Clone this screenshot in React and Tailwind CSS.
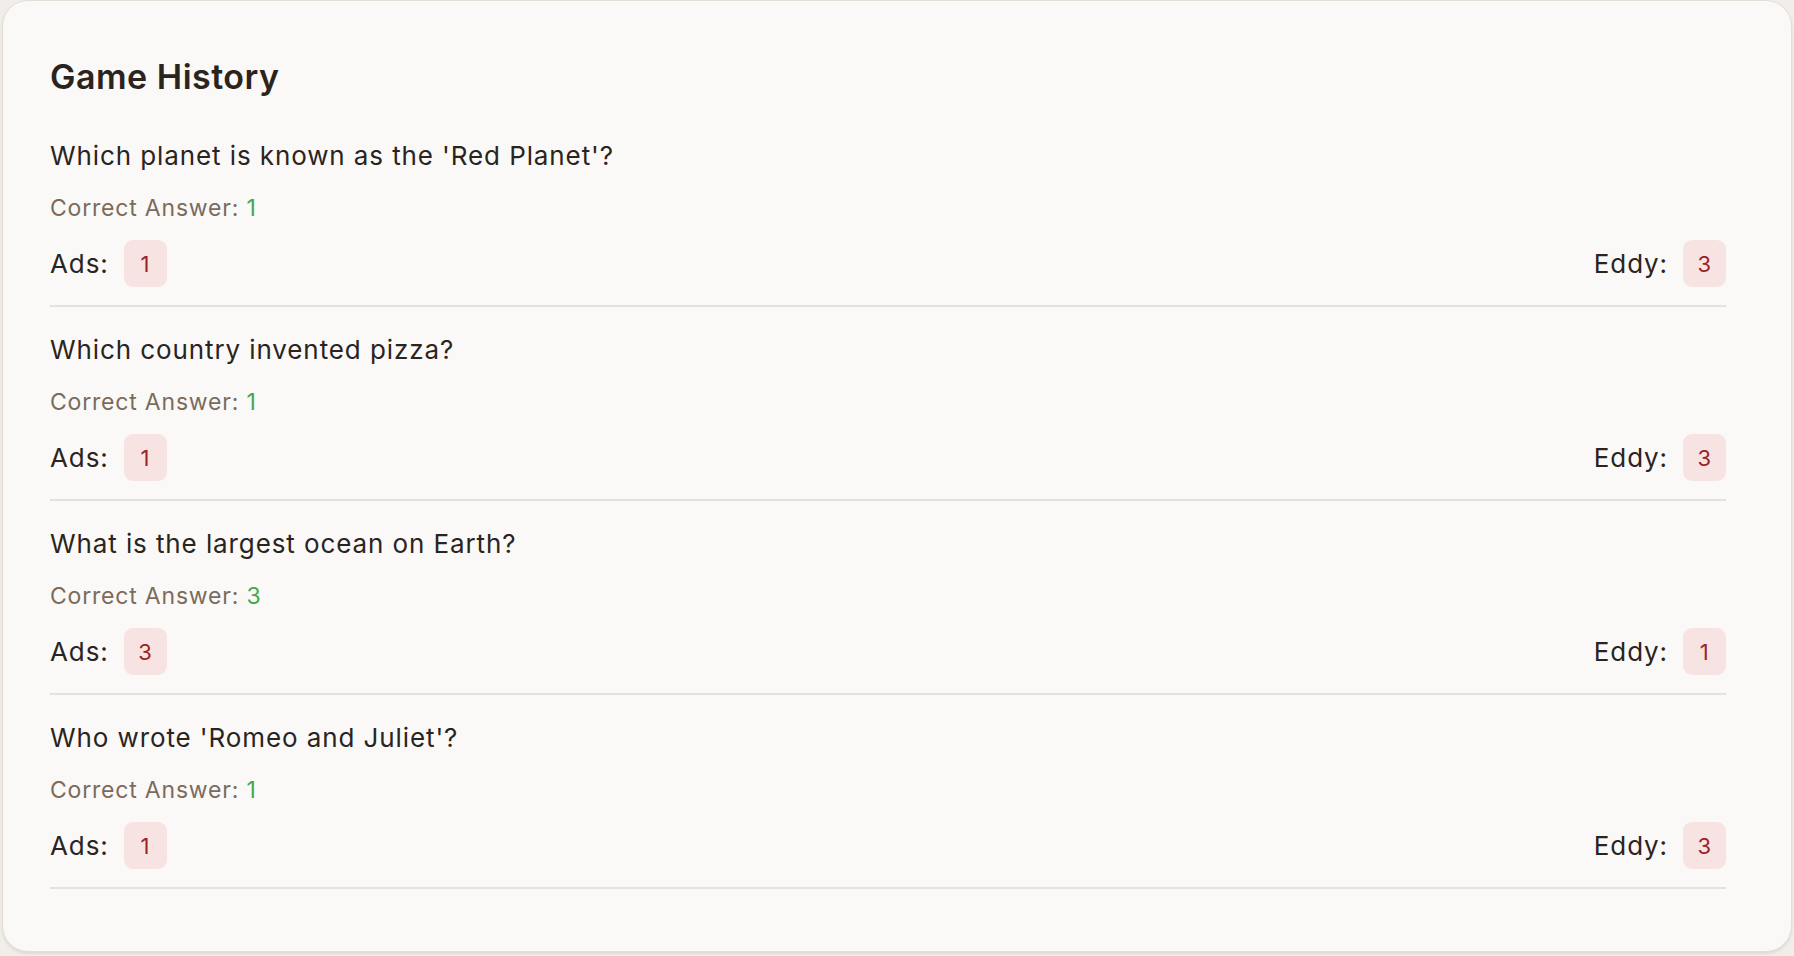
import React from "react";

const items = [
  { q: "Which planet is known as the 'Red Planet'?", correct: 1, ads: 1, eddy: 3 },
  { q: "Which country invented pizza?", correct: 1, ads: 1, eddy: 3 },
  { q: "What is the largest ocean on Earth?", correct: 3, ads: 3, eddy: 1 },
  { q: "Who wrote 'Romeo and Juliet'?", correct: 1, ads: 1, eddy: 3 },
];

function Badge({ value }) {
  return (
    <span className="flex h-[47px] min-w-[43px] items-center justify-center rounded-[9px] bg-[#f8e3e3] px-[14px] text-[22px] leading-none tracking-[0.5px] text-[#9b2424]">
      {value}
    </span>
  );
}

export default function App() {
  return (
    <div
      className="min-h-screen bg-[#f1eeea] px-[2px]"
      style={{ fontFamily: "Inter, 'Noto Sans', sans-serif" }}
    >
      <div className="rounded-[26px] border border-[#e4ddd5] bg-[#faf9f7] pb-[62px] pl-[47px] pr-[65px] pt-[56px] text-[#2b241e] shadow-[0_2px_3px_rgba(0,0,0,0.08)]">
        <h1 className="text-[34px] font-semibold leading-[40px] tracking-[0.5px]">Game History</h1>
        <div className="mt-[41px] flex flex-col gap-[25px]">
          {items.map((it, i) => (
            <div key={i} className="border-b-2 border-[#e7e1db] pb-[18px]">
              <div className="text-[26px] leading-[36px] tracking-[0.9px]">{it.q}</div>
              <div className="mt-[19px] text-[23px] leading-[30px] tracking-[0.8px] text-[#7b6b5d]">
                Correct Answer: <span className="text-[#45a84d]">{it.correct}</span>
              </div>
              <div className="mt-[17px] flex items-center justify-between">
                <div className="flex items-center gap-[15px]">
                  <span className="text-[26px] leading-[36px] tracking-[0.9px]">Ads:</span>
                  <Badge value={it.ads} />
                </div>
                <div className="flex items-center gap-[15px]">
                  <span className="text-[26px] leading-[36px] tracking-[0.9px]">Eddy:</span>
                  <Badge value={it.eddy} />
                </div>
              </div>
            </div>
          ))}
        </div>
      </div>
    </div>
  );
}
